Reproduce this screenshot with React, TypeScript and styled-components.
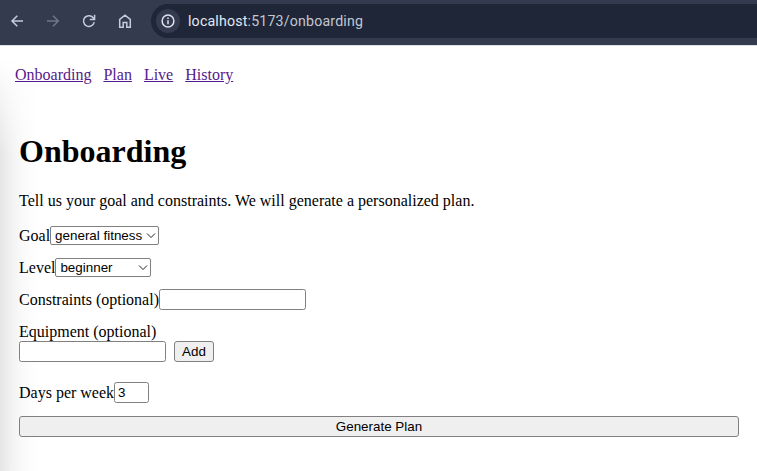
import React from "react";
import styled, { createGlobalStyle } from "styled-components";

const GlobalStyle = createGlobalStyle`
  *, *::before, *::after { box-sizing: border-box; }
  body {
    margin: 0;
    background: #fff;
    color: #000;
    font: 16px/18px "Liberation Serif", "Times New Roman", serif;
    overflow: hidden;
  }
`;

const Toolbar = styled.header`
  display: flex;
  align-items: center;
  height: 45px;
  padding: 0 0 3px 7px;
  background: #343b4f;
`;

const NavButton = styled.span<{ $dim?: boolean }>`
  display: flex;
  align-items: center;
  justify-content: center;
  width: 20px;
  height: 20px;
  margin-right: 16px;
  color: ${(p) => (p.$dim ? "#717785" : "#c5cbdf")};
`;

const AddressBar = styled.div`
  display: flex;
  align-items: center;
  flex: 1;
  height: 34px;
  padding-left: 5px;
  border-radius: 17px 0 0 17px;
  background: #1e2638;
`;

const SiteInfo = styled.span`
  display: flex;
  align-items: center;
  justify-content: center;
  width: 24px;
  height: 24px;
  margin-right: 8px;
  border-radius: 50%;
  background: #343b4f;
  color: #dfe2ee;
`;

const Url = styled.span`
  font: 14.2px/20px Roboto, sans-serif;
  letter-spacing: 0.17px;
  color: #c3c6cf;
`;

const Host = styled.span`
  color: #e4e7f1;
`;

const Page = styled.div`
  position: relative;
  height: 426px;
  border-top: 1px solid #e0e1e4;
`;

const EdgeShade = styled.div`
  position: absolute;
  inset: 0 auto 0 0;
  width: 38px;
  background: linear-gradient(to right, #e5e5e5, #f2f2f2 30%, #fafafa 60%, #fff);
  mask-image: linear-gradient(to bottom, transparent 12px, #000 110px);
`;

const Nav = styled.nav`
  position: relative;
  display: flex;
  gap: 12px;
  padding: 20px 15px 0;
`;

const NavLink = styled.a`
  color: #551a8b;
  text-decoration: underline;
`;

const Main = styled.main`
  position: relative;
  padding: 49px 18px 0 19px;
`;

const Title = styled.h1`
  margin: 0;
  font-size: 32px;
  line-height: 37px;
`;

const Intro = styled.p`
  margin: 22px 0 16px;
`;

const Form = styled.form`
  display: flex;
  flex-direction: column;
`;

const Field = styled.label<{ $height: number; $gap: number }>`
  display: flex;
  align-items: center;
  height: ${(p) => p.$height}px;
  margin-bottom: ${(p) => p.$gap}px;
`;

const SelectFrame = styled.span<{ $width: number }>`
  position: relative;
  display: flex;
  width: ${(p) => p.$width}px;
  height: 19px;

  svg {
    position: absolute;
    right: 3px;
    top: 5px;
    pointer-events: none;
  }
`;

const Select = styled.select`
  appearance: none;
  width: 100%;
  height: 19px;
  margin: 0;
  padding: 0 4px;
  border: 1px solid #808080;
  border-radius: 2px;
  background: #fff;
  color: #000;
  font: 13.4px/17px "Liberation Sans", Arial, sans-serif;
`;

const Input = styled.input<{ $width: number }>`
  width: ${(p) => p.$width}px;
  height: 21px;
  margin: 0;
  padding: 0 3px;
  border: 1px solid #808080;
  border-radius: 2.5px;
  background: #fff;
  color: #000;
  font: 13.4px/18px "Liberation Sans", Arial, sans-serif;
`;

const EquipmentLabel = styled.div`
  height: 18px;
`;

const EquipmentRow = styled.div`
  display: flex;
  gap: 8px;
  margin-bottom: 20px;
`;

const Button = styled.button<{ $width?: number }>`
  width: ${(p) => (p.$width ? `${p.$width}px` : "100%")};
  height: 21px;
  padding: 0;
  border: 1px solid #808080;
  border-radius: 3px;
  background: #efefef;
  color: #000;
  font: 13.4px/18px "Liberation Sans", Arial, sans-serif;
`;

const Chevron = () => (
  <svg width="10" height="9" viewBox="0 0 10 9" fill="none" stroke="#222" strokeWidth="1">
    <path d="M1 2.5 5 6.5 9 2.5" />
  </svg>
);

const Dropdown = ({ width, options }: { width: number; options: string[] }) => (
  <SelectFrame $width={width}>
    <Select defaultValue={options[0]}>
      {options.map((o) => (
        <option key={o}>{o}</option>
      ))}
    </Select>
    <Chevron />
  </SelectFrame>
);

const stroke = { fill: "none", stroke: "currentColor", strokeWidth: 1.5 };

export default function App() {
  return (
    <>
      <GlobalStyle />
      <Toolbar>
        <NavButton>
          <svg width="20" height="20" viewBox="0 0 20 20" {...stroke}>
            <path d="M16 10H5M10.3 4.7 5 10l5.3 5.3" />
          </svg>
        </NavButton>
        <NavButton $dim>
          <svg width="20" height="20" viewBox="0 0 20 20" {...stroke}>
            <path d="M4 10h11M10 4.7l5.3 5.3-5.3 5.3" />
          </svg>
        </NavButton>
        <NavButton>
          <svg width="20" height="20" viewBox="0 0 20 20" {...stroke}>
            <path d="M15.2 11.1A5.4 5.4 0 1 1 14.5 7.2L15.5 8.3M15.6 3.8V8.5H10.8" />
          </svg>
        </NavButton>
        <NavButton>
          <svg width="20" height="20" viewBox="0 0 20 20" {...stroke}>
            <path d="M4.7 16.2V8.3L10 4.2l5.3 4.1v7.9h-3.5v-4.8H8.2v4.8Z" />
          </svg>
        </NavButton>
        <AddressBar>
          <SiteInfo>
            <svg width="16" height="16" viewBox="0 0 16 16" {...stroke}>
              <circle cx="8" cy="8" r="5.9" />
              <path d="M8 7.3v4M8 4.6v1.5" />
            </svg>
          </SiteInfo>
          <Url>
            <Host>localhost</Host>:5173/onboarding
          </Url>
        </AddressBar>
      </Toolbar>
      <Page>
        <EdgeShade />
        <Nav>
          {["Onboarding", "Plan", "Live", "History"].map((name) => (
            <NavLink key={name} href="#">
              {name}
            </NavLink>
          ))}
        </Nav>
        <Main>
          <Title>Onboarding</Title>
          <Intro>Tell us your goal and constraints. We will generate a personalized plan.</Intro>
          <Form onSubmit={(e) => e.preventDefault()}>
            <Field $height={19} $gap={13}>
              Goal
              <Dropdown width={109} options={["general fitness", "strength"]} />
            </Field>
            <Field $height={19} $gap={12}>
              Level
              <Dropdown width={96} options={["beginner", "intermediate"]} />
            </Field>
            <Field $height={21} $gap={13}>
              Constraints (optional)
              <Input $width={147} aria-label="Constraints" />
            </Field>
            <EquipmentLabel>Equipment (optional)</EquipmentLabel>
            <EquipmentRow>
              <Input $width={147} aria-label="Equipment" />
              <Button type="button" $width={40}>
                Add
              </Button>
            </EquipmentRow>
            <Field $height={21} $gap={13}>
              Days per week
              <Input $width={35} defaultValue="3" />
            </Field>
            <Button type="submit">Generate Plan</Button>
          </Form>
        </Main>
      </Page>
    </>
  );
}
